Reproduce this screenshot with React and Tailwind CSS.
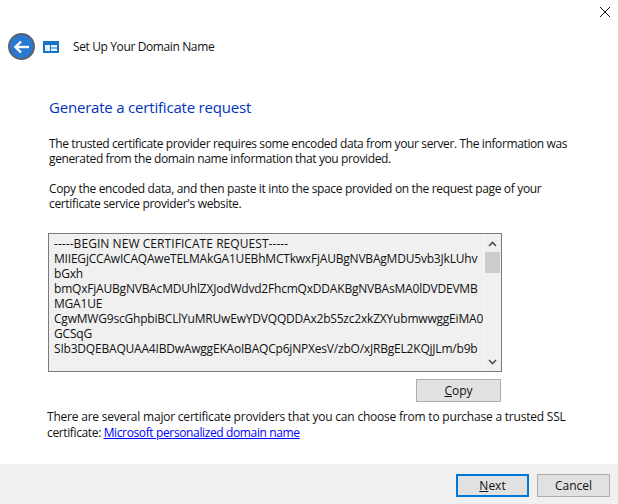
import React from 'react';

const certLines = [
  'MIIEGjCCAwICAQAweTELMAkGA1UEBhMCTkwxFjAUBgNVBAgMDU5vb3JkLUhv',
  'bGxh',
  'bmQxFjAUBgNVBAcMDUhlZXJodWdvd2FhcmQxDDAKBgNVBAsMA0lDVDEVMB',
  'MGA1UE',
  'CgwMWG9scGhpbiBCLlYuMRUwEwYDVQQDDAx2bS5zc2xkZXYubmwwggEiMA0',
  'GCSqG',
  'SIb3DQEBAQUAA4IBDwAwggEKAoIBAQCp6jNPXesV/zbO/xJRBgEL2KQjJLm/b9b',
];

const App = () => {
  return (
    <div className="w-[618px] h-[504px] flex flex-col bg-white text-[12px] leading-[15px] text-[#111] overflow-hidden font-['Open_Sans','Noto_Sans',sans-serif]">
      <div className="h-[33px] flex justify-end items-start pt-[7px] pr-[8px]">
        <svg width="10" height="10" viewBox="0 0 10 10" fill="none" stroke="#111" strokeWidth="1">
          <path d="M0 0L10 10M10 0L0 10" />
        </svg>
      </div>

      <div className="h-[27px] flex items-center pl-[8px]">
        <div className="w-[27px] h-[27px] rounded-full bg-[#2a78d0] border-2 border-[#5b6470] flex items-center justify-center">
          <svg width="17" height="14" viewBox="0 0 17 14" fill="none" stroke="white" strokeWidth="2.4">
            <path d="M16 7H3" />
            <path d="M8 1.5L2.5 7L8 12.5" />
          </svg>
        </div>
        <svg width="16" height="12" viewBox="0 0 16 12" className="ml-[8px]">
          <rect width="16" height="12" fill="#1a74c4" />
          <rect x="2" y="4" width="5" height="6" fill="#e8f2fb" />
          <rect x="8" y="4" width="6" height="2.5" fill="#e8f2fb" />
          <rect x="8" y="7.5" width="6" height="2.5" fill="#e8f2fb" />
        </svg>
        <span className="ml-[14px] tracking-[-0.38px]">Set Up Your Domain Name</span>
      </div>

      <div className="flex-1 pt-[36px] pl-[49px] pr-[16px]">
        <h1 className="text-[15px] leading-[22px] text-[#0033bc] tracking-[-0.2px]">Generate a certificate request</h1>

        <p className="mt-[18px] w-[560px] tracking-[-0.38px]">
          The trusted certificate provider requires some encoded data from your server. The information was generated from the domain name information that you provided.
        </p>
        <p className="mt-[15px] w-[500px] tracking-[-0.34px]">
          Copy the encoded data, and then paste it into the space provided on the request page of your certificate service provider's website.
        </p>

        <div className="mt-[22px] -ml-[1px] w-[454px] h-[139px] flex border border-[#7a7a7a] bg-[#f0f0f0]">
          <div className="flex-1 pl-[5px] pt-[2px] whitespace-nowrap overflow-hidden tracking-[-0.2px]">
            <div className="tracking-[0.06px]">-----BEGIN NEW CERTIFICATE REQUEST-----</div>
            {certLines.map((line, idx) => (
              <div key={idx}>{line}</div>
            ))}
          </div>
          <div className="w-[16px] mr-[2px] pl-[1px] flex flex-col border-l border-[#f7f7f7]">
            <svg width="9" height="6" viewBox="0 0 9 6" fill="none" stroke="#505050" strokeWidth="1.6" className="mt-[7px] mx-auto">
              <path d="M1 5L4.5 1.5L8 5" />
            </svg>
            <div className="w-[15px] h-[21px] mt-[5px] bg-[#cdcdcd]" />
            <svg width="9" height="6" viewBox="0 0 9 6" fill="none" stroke="#505050" strokeWidth="1.6" className="mt-auto mb-[6px] mx-auto">
              <path d="M1 1L4.5 4.5L8 1" />
            </svg>
          </div>
        </div>

        <div className="flex justify-end mt-[7px] w-[452px]">
          <button className="w-[85px] h-[23px] bg-[#e1e1e1] border border-[#adadad]">
            <span className="underline">C</span>opy
          </button>
        </div>

        <p className="mt-[7px] -ml-[2px] w-[540px] leading-[16px] tracking-[-0.37px]">
          <span className="tracking-[-0.21px]">There are several major certificate providers that you can choose from to purchase a trusted SSL</span> certificate: <a className="text-[#0000ff] underline">Microsoft personalized domain name</a>
        </p>
      </div>

      <div className="h-[40px] bg-[#f0f0f0] flex justify-end items-start pt-[10px] pr-[8px] gap-[8px]">
        <button className="w-[73px] h-[23px] bg-[#e1e1e1] border-2 border-[#0078d7]">
          <span className="underline">N</span>ext
        </button>
        <button className="w-[73px] h-[23px] bg-[#e1e1e1] border border-[#adadad]">Cancel</button>
      </div>
    </div>
  );
};

export default App;
